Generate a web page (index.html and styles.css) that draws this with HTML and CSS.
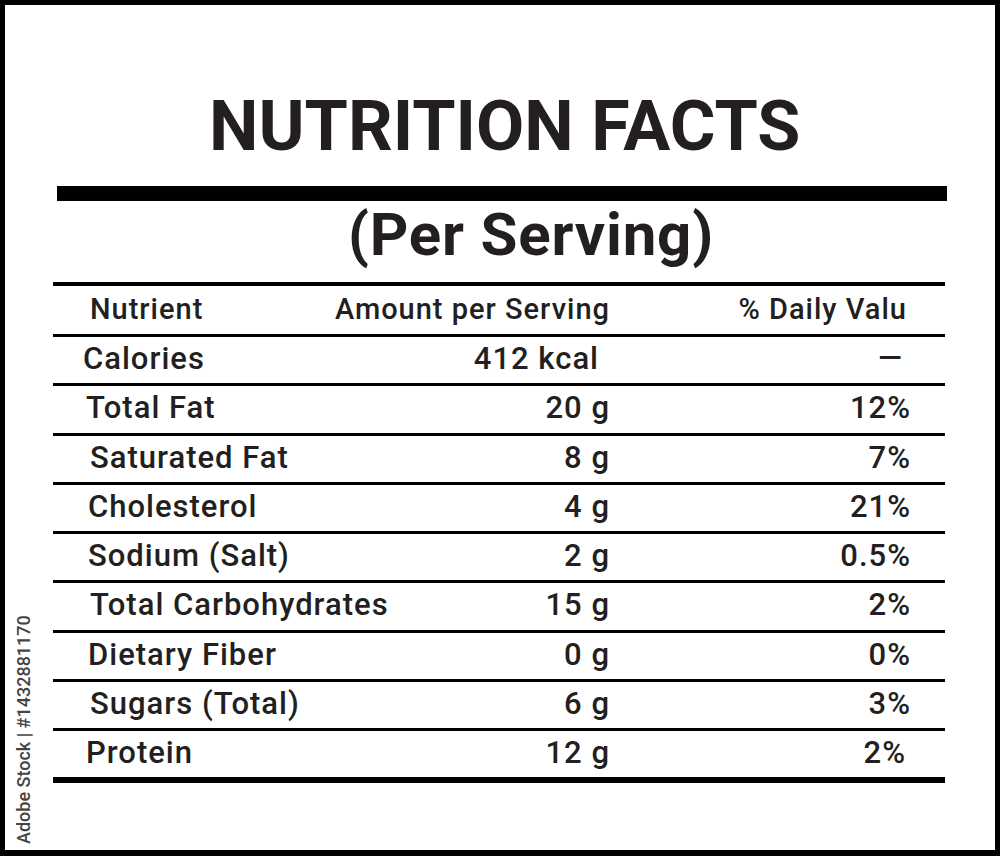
FILE: index.html
```html
<!DOCTYPE html>
<html lang="en">
<head>
<meta charset="utf-8">
<title>Nutrition Facts</title>
<link rel="stylesheet" href="styles.css">
</head>
<body>
<div class="frame">
  <h1 class="title">NUTRITION FACTS</h1>
  <div class="bar"></div>
  <h2 class="subtitle">(Per Serving)</h2>
  <div class="table">
    <div class="row head">
      <span class="name">Nutrient</span>
      <span class="amt">Amount per Serving</span>
      <span class="dv">% Daily Valu</span>
    </div>
    <div class="row">
      <span class="name n-l">Calories</span>
      <span class="amt a-cal">412 kcal</span>
      <span class="dv d-dash">—</span>
    </div>
    <div class="row">
      <span class="name n-s">Total Fat</span>
      <span class="amt">20 g</span>
      <span class="dv">12%</span>
    </div>
    <div class="row">
      <span class="name n-r">Saturated Fat</span>
      <span class="amt">8 g</span>
      <span class="dv">7%</span>
    </div>
    <div class="row">
      <span class="name">Cholesterol</span>
      <span class="amt">4 g</span>
      <span class="dv">21%</span>
    </div>
    <div class="row">
      <span class="name">Sodium (Salt)</span>
      <span class="amt">2 g</span>
      <span class="dv">0.5%</span>
    </div>
    <div class="row">
      <span class="name n-r">Total Carbohydrates</span>
      <span class="amt">15 g</span>
      <span class="dv">2%</span>
    </div>
    <div class="row">
      <span class="name">Dietary Fiber</span>
      <span class="amt">0 g</span>
      <span class="dv">0%</span>
    </div>
    <div class="row">
      <span class="name n-r">Sugars (Total)</span>
      <span class="amt">6 g</span>
      <span class="dv">3%</span>
    </div>
    <div class="row last">
      <span class="name n-s">Protein</span>
      <span class="amt">12 g</span>
      <span class="dv d-l">2%</span>
    </div>
  </div>
  <div class="stamp">Adobe Stock | #1432881170</div>
</div>
</body>
</html>
```

FILE: styles.css
```css
html, body {
  margin: 0;
  padding: 0;
  background: #ffffff;
}

.frame {
  position: relative;
  width: 1000px;
  height: 856px;
  box-sizing: border-box;
  border: 5px solid #000;
  border-bottom-width: 6px;
  background: #fff;
  font-family: Roboto, "Liberation Sans", sans-serif;
  color: #231f20;
  overflow: hidden;
}

.title {
  margin: 86px 0 0 0;
  padding-left: 204px;
  font-size: 70px;
  line-height: 70px;
  font-weight: 700;
  letter-spacing: 0;
}

.bar {
  margin: 25px 0 0 52px;
  width: 890px;
  height: 15px;
  background: #000;
}

.subtitle {
  margin: 4px 0 0 0;
  padding-left: 343px;
  font-size: 60px;
  line-height: 60px;
  font-weight: 700;
  letter-spacing: 0.8px;
}

.table {
  margin: 17px 0 0 48px;
  width: 892px;
  border-top: 4px solid #000;
}

.row {
  display: grid;
  grid-template-columns: 277px 279px 1fr;
  align-items: center;
  height: 43.25px;
  padding-bottom: 3px;
  border-bottom: 3px solid #000;
  font-size: 31px;
  font-weight: 500;
  letter-spacing: 1px;
  box-sizing: content-box;
}

.row.head {
  height: 45px;
  padding-bottom: 3px;
  font-size: 29px;
}

.row.last {
  border-bottom-width: 6px;
}

.name {
  padding-left: 35px;
  white-space: nowrap;
}

.head .name {
  padding-left: 37px;
}

.n-l {
  padding-left: 30px;
}

.n-s {
  padding-left: 33px;
}

.n-r {
  padding-left: 37px;
}

.amt {
  text-align: right;
  white-space: nowrap;
  margin-right: -1px;
}

.a-cal {
  padding-right: 11px;
}

.dv {
  text-align: right;
  padding-right: 34px;
  white-space: nowrap;
}

.head .dv {
  padding-right: 38px;
}

.d-dash {
  padding-right: 42px;
}

.d-l {
  padding-right: 39px;
}

.stamp {
  position: absolute;
  left: 9px;
  top: 839px;
  transform-origin: 0 0;
  transform: rotate(-90deg);
  font-family: Roboto, "Liberation Sans", sans-serif;
  font-size: 18px;
  line-height: 20px;
  font-weight: 500;
  color: #444;
  white-space: nowrap;
}
```
